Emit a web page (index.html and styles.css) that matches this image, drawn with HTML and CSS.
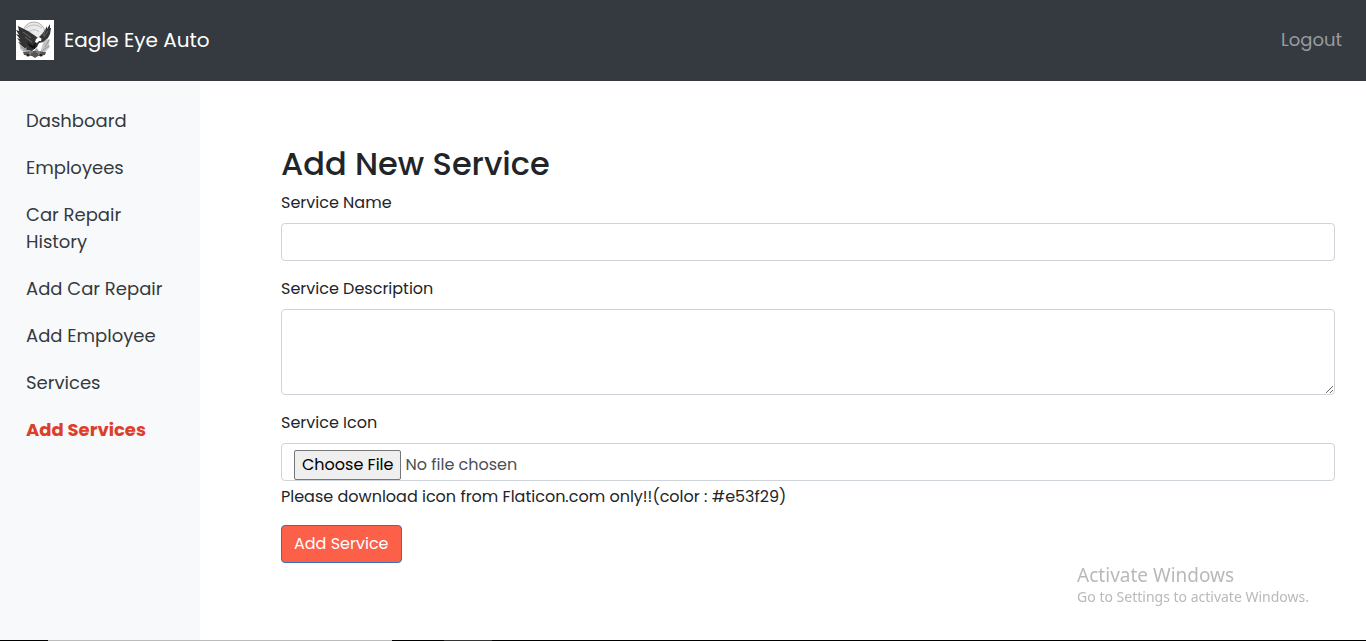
FILE: index.html
```html
<!DOCTYPE html>
<html lang="en">
<head>
<meta charset="utf-8">
<meta name="viewport" content="width=device-width, initial-scale=1">
<title>Eagle Eye Auto - Add New Service</title>
<link rel="stylesheet" href="styles.css">
</head>
<body>
<header class="navbar">
  <a class="brand" href="#">
    <svg class="brand-logo" viewBox="0 0 38 40" aria-hidden="true">
      <rect width="38" height="40" fill="#fff"/>
      <circle cx="18" cy="13" r="11" fill="#eaeaea" stroke="#b0b0b0" stroke-width="1"/>
      <path d="M10 8c5-4 11-4 16 0M13 12c3-3 7-3 10 0" fill="none" stroke="#bbb" stroke-width="1"/>
      <path d="M3 21l4-1 3 4 4 2-3 5 4 2H9l-5-4zM28 20l6-1-1 5 1 3-5 5-5 1z" fill="#c4c4c4"/>
      <path d="M4 22l5 5M33 20l-4 7M5 27l5 3M33 26l-6 4" stroke="#999" stroke-width="1"/>
      <path d="M2 6l4 2 6 3 6 4 4 3 4-4 3-4 2-4 0 3 3-5 0 4 1 0-1 6-2 4-5 4-4 1-2 4-5 4-5-1-5-4-4-4 3 1-4-5 3 1-4-5 3 1-3-5 3 1z" fill="#333"/>
      <path d="M7 12l8 6M9 17l7 5M30 9l-3 7M32 11l-4 6" stroke="#6b6b6b" stroke-width="1"/>
      <path d="M11 22l6 4 3-4-1 7-5-2z" fill="#111"/>
      <path d="M20 19l3-2 3 2 0 2-3 0-2 2-2-1z" fill="#fff"/>
      <path d="M25 19l2 1-2 2z" fill="#444"/>
      <path d="M11 27l-5 4 6-1 5 2 4-4 2 4 5-2-2 3H9z" fill="#9c9c9c"/>
      <path d="M7 32l4 0 3-1h9l3 1 4 0-1 3-7 1-3 2-3-2-8-1z" fill="#555"/>
      <path d="M13 32h4M20 32h4M11 34h4M22 34h4" stroke="#aaa" stroke-width="1"/>
      <circle cx="12" cy="35" r="1.6" fill="#222"/>
      <circle cx="25" cy="35" r="1.6" fill="#222"/>
    </svg>
    <span>Eagle Eye Auto</span>
  </a>
  <a class="logout" href="#">Logout</a>
</header>
<div class="layout">
  <nav class="sidebar" aria-label="Main">
    <a class="side-link" href="#">Dashboard</a>
    <a class="side-link" href="#">Employees</a>
    <a class="side-link" href="#">Car Repair History</a>
    <a class="side-link" href="#">Add Car Repair</a>
    <a class="side-link" href="#">Add Employee</a>
    <a class="side-link" href="#">Services</a>
    <a class="side-link active" href="#" aria-current="page">Add Services</a>
  </nav>
  <main class="content">
    <h1 class="title">Add New Service</h1>
    <form>
      <div class="field">
        <label for="name">Service Name</label>
        <input class="control" id="name" type="text">
      </div>
      <div class="field">
        <label for="description">Service Description</label>
        <textarea class="control area" id="description"></textarea>
      </div>
      <div class="field">
        <label for="icon">Service Icon</label>
        <input class="control file" id="icon" type="file">
        <p class="hint">Please download icon from Flaticon.com only!!(color : #e53f29)</p>
      </div>
      <button class="submit" type="submit">Add Service</button>
    </form>
  </main>
</div>
<aside class="watermark">
  <p class="watermark-title">Activate Windows</p>
  <p class="watermark-text">Go to Settings to activate Windows.</p>
</aside>
<div class="bottom-edge"></div>
</body>
</html>
```
FILE: styles.css
```css
* { box-sizing: border-box; }

body {
  margin: 0;
  min-height: 100vh;
  display: flex;
  flex-direction: column;
  background: #fff;
  color: #212529;
  font: 400 16px/24px Poppins, Inter, "Open Sans", sans-serif;
}

a { text-decoration: none; }
p { margin: 0; }

.navbar {
  display: flex;
  align-items: center;
  justify-content: space-between;
  padding: 20px 24px 21px 16px;
  background: #343a40;
}

.brand {
  display: flex;
  align-items: center;
  gap: 10px;
  color: #fff;
  font-size: 20px;
  line-height: 30px;
}

.brand-logo {
  display: block;
  width: 38px;
  height: 40px;
}

.logout {
  color: #999c9f;
  font-size: 18px;
  line-height: 26px;
}

.layout {
  display: flex;
  flex: 1;
}

.sidebar {
  flex: none;
  width: 200px;
  padding-top: 16px;
  background: #f8f9fa;
}

.side-link {
  display: block;
  padding: 10px 26px;
  color: #343a40;
  font-size: 18px;
  line-height: 27px;
}

.side-link.active {
  color: #dc402b;
  font-weight: 700;
}

.content {
  flex: 1;
  min-width: 0;
  padding: 64px 31px 48px 81px;
}

.title {
  margin: 0 0 8px;
  font-size: 32px;
  line-height: 38px;
  font-weight: 500;
}

.field { margin-bottom: 16px; }

.field label {
  display: block;
  margin-bottom: 8px;
}

.control {
  display: block;
  width: 100%;
  height: 38px;
  padding: 6px 12px;
  border: 1px solid #ced4da;
  border-radius: 4px;
  background: #fff;
  color: #495057;
  font: inherit;
}

.area {
  height: 86px;
  resize: vertical;
}

.file::file-selector-button {
  height: 30px;
  margin: 0 4px 0 0;
  padding: 1px 7px;
  border: 1px solid #767676;
  border-radius: 2px;
  background: #efefef;
  color: #000;
  font: inherit;
}

.hint { margin-top: 4px; }

.submit {
  display: block;
  padding: 6px 12px;
  border: 1px solid #3973b8;
  border-radius: 4px;
  background: #fc6049;
  color: #fff;
  font: inherit;
}

.watermark {
  position: fixed;
  right: 57px;
  bottom: 34px;
  color: #b9b9b9;
  font-family: "Segoe UI", "Noto Sans", sans-serif;
}

.watermark-title {
  font-size: 19px;
  line-height: 24px;
}

.watermark-text {
  font-size: 14px;
  line-height: 20px;
}

.bottom-edge {
  position: fixed;
  right: 0;
  bottom: 0;
  left: 0;
  height: 1px;
  background: linear-gradient(to right, #000 48px, #bbb 48px 392px, #000 392px 444px, #333 444px 492px, #000 492px);
}
```
